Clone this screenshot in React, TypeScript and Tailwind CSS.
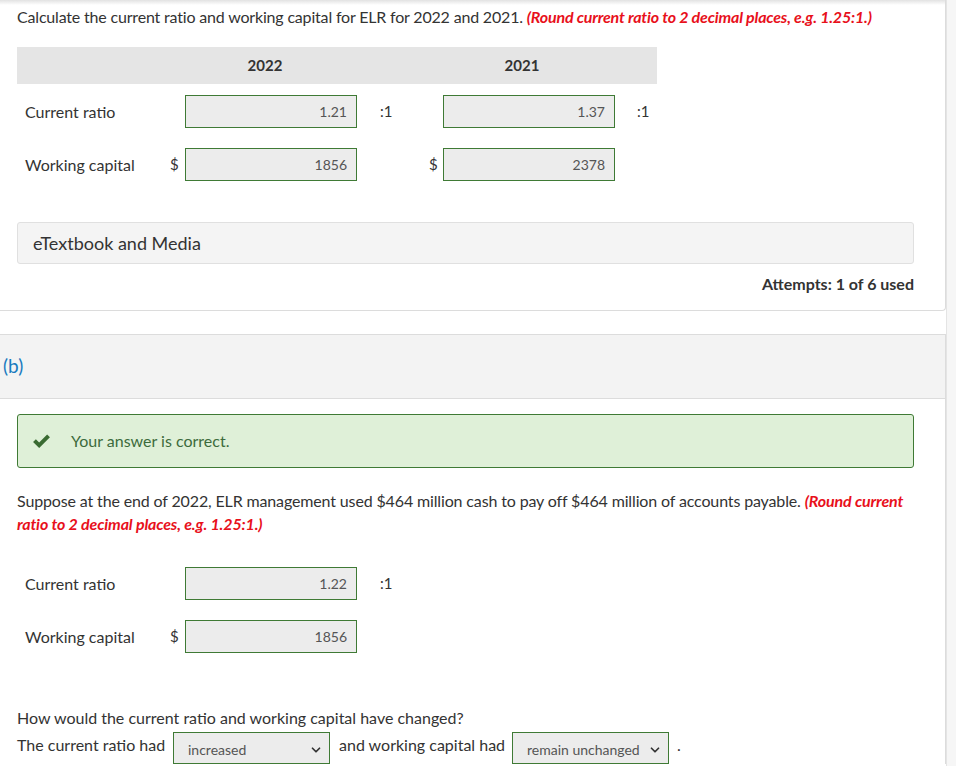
import { ChevronDown } from 'lucide-react'

function Field({ value }: { value: string }) {
  return (
    <div className="w-[172px] h-[33px] border border-[#3f7a35] bg-[#ececec] flex items-center justify-end pr-[9px] text-[14px] text-[#555]">
      {value}
    </div>
  )
}

function Select({ value, width }: { value: string; width: string }) {
  return (
    <div className={`${width} h-[32px] border border-[#3f7a35] bg-[#ececec] flex items-center justify-between pl-[14px] pr-[6px] pt-[3px] text-[14px] text-[#555]`}>
      <span>{value}</span>
      <ChevronDown className="h-[14px] w-[14px] text-[#333]" strokeWidth={3} />
    </div>
  )
}

function Hint({ children }: { children: React.ReactNode }) {
  return <span className="text-[#e8101b] font-bold italic">{children}</span>
}

export default function App() {
  return (
    <div className="w-[956px] h-[766px] overflow-hidden bg-white flex font-['Lato',sans-serif] text-[#333]">
      <div className="w-[946px] shrink-0">
        {/* Part (a) card */}
        <div className="border-r border-b border-[#dcdcdc] rounded-br-[4px] h-[311px] relative">
          <div className="absolute top-0 left-0 right-0 h-[5px] bg-gradient-to-b from-[#e2e2e2] to-white" />
          <div className="pl-[17px] pt-[6px]">
            <p className="text-[16px] leading-[22px] tracking-[-0.18px]">
              Calculate the current ratio and working capital for ELR for 2022 and 2021.{' '}
              <Hint>(Round current ratio to 2 decimal places, e.g. 1.25:1.)</Hint>
            </p>

            {/* Table */}
            <div className="mt-[19px] w-[640px] h-[37px] bg-[#e5e5e5] flex items-center text-[15px] font-bold">
              <span className="ml-[148px] w-[200px] text-center">2022</span>
              <span className="ml-[57px] w-[200px] text-center">2021</span>
            </div>

            <div className="mt-[11px] flex items-center h-[33px] text-[16px]">
              <span className="w-[168px] pl-[8px]">Current ratio</span>
              <Field value="1.21" />
              <span className="w-[86px] pl-[23px] text-[15px]">:1</span>
              <Field value="1.37" />
              <span className="pl-[22px] text-[15px]">:1</span>
            </div>

            <div className="mt-[20px] flex items-center h-[33px] text-[16px]">
              <span className="w-[143px] pl-[8px]">Working capital</span>
              <span className="w-[25px] pl-[10px] text-[15px]">$</span>
              <Field value="1856" />
              <span className="w-[86px] pl-[72px] text-[15px]">$</span>
              <Field value="2378" />
            </div>

            <div className="mt-[41px] w-[897px] h-[42px] bg-[#f4f4f4] border border-[#e0e0e0] rounded-[3px] flex items-center pl-[15px] text-[18px]">
              eTextbook and Media
            </div>

            <div className="w-[897px] mt-[10px] text-right text-[16px] font-bold leading-[20px]">
              Attempts: 1 of 6 used
            </div>
          </div>
        </div>

        {/* Part (b) card */}
        <div className="mt-[23px] border-t border-r border-[#dcdcdc]">
          <div className="h-[64px] bg-[#f3f3f3] border-b border-[#dcdcdc] flex items-center pl-[3px] text-[19px] text-[#1a7bbf]">
            (b)
          </div>
          <div className="pl-[17px]">
            <div className="mt-[15px] w-[897px] h-[54px] bg-[#dff0d8] border border-[#3f7a35] rounded-[3px] flex items-center pl-[14px] text-[16px] text-[#3c6b3c]">
              <svg viewBox="0 0 20 16" className="w-[19px] h-[15px]" aria-hidden>
                <path d="M1 8.5 L4 5.5 L7.5 9 L16 0.5 L19 3.5 L7.5 15 Z" fill="#3a6b32" />
              </svg>
              <span className="ml-[20px]">Your answer is correct.</span>
            </div>

            <p className="mt-[21px] w-[897px] text-[16px] leading-[23px] tracking-[-0.14px]">
              Suppose at the end of 2022, ELR management used $464 million cash to pay off $464 million of accounts payable.{' '}
              <Hint>(Round current ratio to 2 decimal places, e.g. 1.25:1.)</Hint>
            </p>

            <div className="mt-[32px] flex items-center h-[33px] text-[16px]">
              <span className="w-[168px] pl-[8px]">Current ratio</span>
              <Field value="1.22" />
              <span className="pl-[23px] text-[15px]">:1</span>
            </div>

            <div className="mt-[20px] flex items-center h-[33px] text-[16px]">
              <span className="w-[143px] pl-[8px]">Working capital</span>
              <span className="w-[25px] pl-[10px] text-[15px]">$</span>
              <Field value="1856" />
            </div>

            <p className="mt-[55px] text-[16px] leading-[20px]">How would the current ratio and working capital have changed?</p>
            <div className="flex items-start text-[16px] leading-[20px] mt-[4px]">
              <span className="mt-[3px] w-[156px]">The current ratio had</span>
              <Select value="increased" width="w-[157px]" />
              <span className="mt-[3px] ml-[9px] w-[173px]">and working capital had</span>
              <Select value="remain unchanged" width="w-[157px]" />
              <span className="mt-[3px] ml-[8px]">.</span>
            </div>
          </div>
        </div>
      </div>
      <div className="flex-1 bg-[#f6f6f6] border-l border-[#e4e4e4]" />
    </div>
  )
}
